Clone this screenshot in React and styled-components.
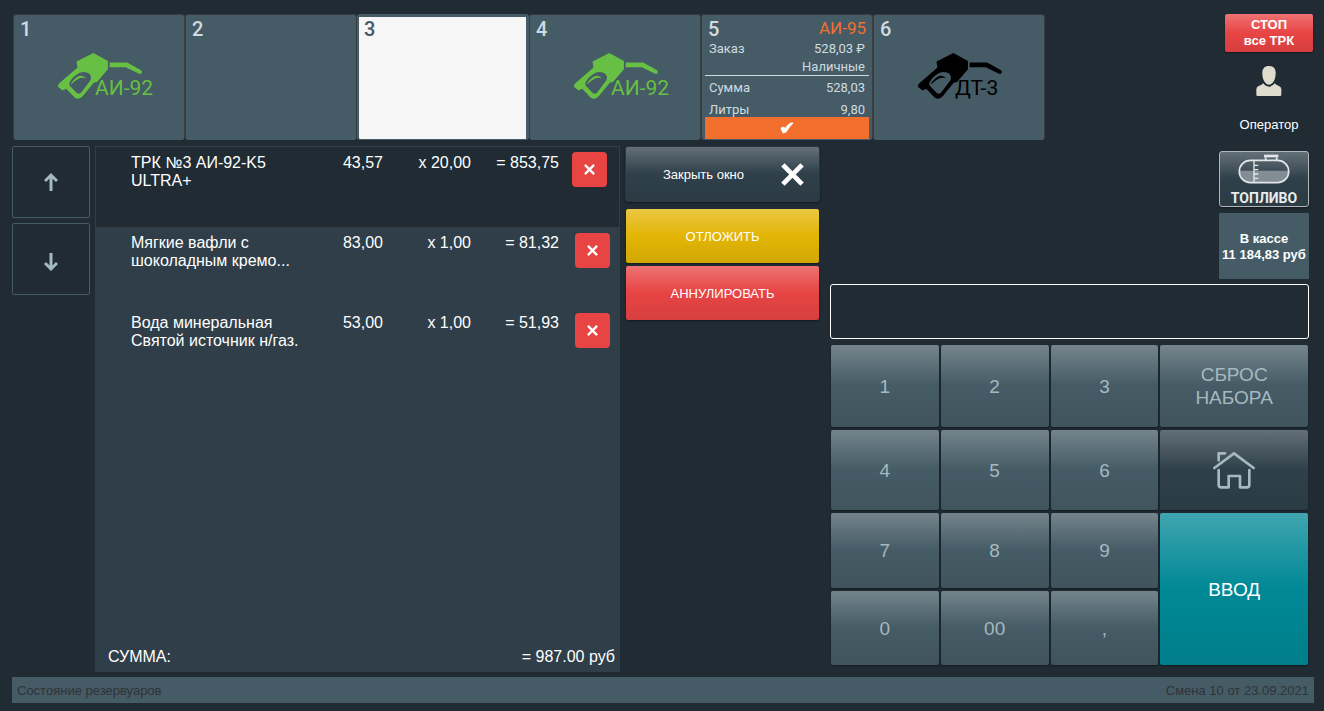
import React, { useState } from 'react';
import styled, { createGlobalStyle, css } from 'styled-components';

const GlobalStyle = createGlobalStyle`
  * {
    box-sizing: border-box;
  }
  body {
    margin: 0;
    background: #202b34;
    font-family: 'Liberation Sans', Arial, sans-serif;
  }
  button {
    font-family: inherit;
    cursor: pointer;
  }
`;

const gloss = css`
  background-image: linear-gradient(
    rgba(255, 255, 255, 0.25),
    rgba(255, 255, 255, 0) 50%,
    rgba(0, 0, 0, 0.08)
  );
  box-shadow: 0 1px 2px rgba(0, 0, 0, 0.4);
`;

const Screen = styled.div`
  display: flex;
  flex-direction: column;
  min-height: 100vh;
  padding: 14px 10px 8px 12px;
  color: #fff;
`;

const TopBar = styled.header`
  display: flex;
  justify-content: space-between;
  gap: 16px;
  padding: 0 1px;
`;

const Pumps = styled.div`
  flex: 1;
  display: grid;
  grid-template-columns: repeat(6, minmax(0, 172px));
`;

const PumpTile = styled.section`
  display: flex;
  flex-direction: column;
  height: 126px;
  padding: 2px 3px 1px;
  border: 1px solid #3b3c3f;
  border-bottom: 0;
  border-radius: 3px;
  background: #455b65;
  color: ${(props) => (props.$active ? '#455b65' : '#cfdbe0')};
  font-family: Roboto, sans-serif;
  ${(props) =>
    props.$active &&
    css`
      background: #f6f6f6;
      border: 2px solid #455b65;
      border-width: 3px 3px 1px 2px;
      padding: 0 2px;
    `}
`;

const PumpHead = styled.div`
  display: flex;
  justify-content: space-between;
  height: 22px;
  padding: 0 3px;
  line-height: 24px;
`;

const PumpNumber = styled.span`
  font-size: 20px;
  font-weight: 500;
`;

const FuelName = styled.span`
  font-size: 17px;
  line-height: 22px;
  color: #f36f2d;
`;

const Nozzle = styled.div`
  display: grid;
  padding: 13px 0 0 40px;
  color: ${(props) => props.$color};

  > * {
    grid-area: 1 / 1;
  }
`;

const NozzleLabel = styled.span`
  align-self: end;
  margin-left: 38px;
  font-size: 21px;
  line-height: 24px;
`;

const PumpLine = styled.div`
  display: flex;
  justify-content: space-between;
  height: 18px;
  padding: 0 4px;
  font-size: 13px;
  line-height: 20px;
  white-space: nowrap;
`;

const PumpTotals = styled.div`
  display: flex;
  flex-direction: column;
  gap: 4px;
  height: 42px;
  border-top: 1px solid #cfdbe0;
  padding-top: 2px;
`;

const PumpConfirm = styled.button`
  flex: 1;
  display: flex;
  align-items: center;
  justify-content: center;
  padding: 0;
  border: 0;
  background: #f36f2d;
  color: #fff;
`;

const OperatorBox = styled.div`
  display: flex;
  flex-direction: column;
  align-items: center;
  width: 88px;
  gap: 14px;
`;

const StopButton = styled.button`
  ${gloss}
  width: 100%;
  height: 38px;
  padding: 0;
  border: 0;
  border-radius: 2px;
  background-color: #e84444;
  color: #fff;
  font-size: 13px;
  font-weight: bold;
  line-height: 16px;
`;

const OperatorName = styled.span`
  padding-top: 6px;
  font-size: 13px;
  line-height: 18px;
`;

const Main = styled.main`
  flex: 1;
  display: grid;
  grid-template-columns: 78px minmax(0, 525fr) minmax(0, 195fr) minmax(0, 484fr);
  gap: 5px;
  padding: 6px 5px 5px 0;
`;

const ScrollNav = styled.nav`
  display: flex;
  flex-direction: column;
  gap: 5px;
`;

const ScrollButton = styled.button`
  display: flex;
  align-items: center;
  justify-content: center;
  height: 72px;
  padding: 0;
  border: 1px solid #455b65;
  border-radius: 2px;
  background: transparent;
  color: #a5b9c0;
`;

const Receipt = styled.section`
  display: flex;
  flex-direction: column;
  justify-content: space-between;
  border: 1px solid #2f3e48;
  background: #2f3e48;
  font-size: 16px;
`;

const ReceiptTable = styled.table`
  width: 100%;
  table-layout: fixed;
  border-collapse: collapse;
  line-height: 18px;
`;

const ReceiptRow = styled.tr`
  height: 80px;
  background: ${(props) => (props.$selected ? '#202b34' : 'transparent')};
`;

const NameCell = styled.td`
  padding: 7px 0 0 35px;
  vertical-align: top;
`;

const NumberCell = styled.td`
  width: ${(props) => props.$width}px;
  padding: 7px 0 0;
  vertical-align: top;
  text-align: right;
  white-space: nowrap;
`;

const RemoveCell = styled.td`
  width: 60px;
  padding: ${(props) => (props.$selected ? '5px 0 0 13px' : '6px 0 0 16px')};
  vertical-align: top;
`;

const RemoveButton = styled.button`
  display: flex;
  align-items: center;
  justify-content: center;
  width: 35px;
  height: 35px;
  padding: 0;
  border: 0;
  border-radius: 4px;
  background: #e84444;
  color: #fff;
`;

const ReceiptTotal = styled.div`
  display: flex;
  justify-content: space-between;
  padding: 0 4px 4px 12px;
  line-height: 20px;
`;

const Actions = styled.div`
  display: flex;
  flex-direction: column;
  gap: 3px;
`;

const CloseButton = styled.button`
  ${gloss}
  display: flex;
  align-items: center;
  height: 56px;
  margin-bottom: 4px;
  padding: 0 15px 0 0;
  border: 1px solid #2a3842;
  border-radius: 3px;
  background-color: #2f404a;
  color: #fff;
  font-size: 13px;
`;

const CloseLabel = styled.span`
  flex: 1;
`;

const ActionButton = styled.button`
  ${gloss}
  height: 54px;
  margin: 0 1px;
  padding: 0;
  border: 0;
  border-radius: 2px;
  background-color: ${(props) => props.$color};
  color: #fff;
  font-size: 13px;
`;

const Terminal = styled.div`
  display: flex;
  flex-direction: column;
  gap: 5px;
  padding: 5px 0 7px 5px;
`;

const Tiles = styled.div`
  align-self: flex-end;
  display: flex;
  flex-direction: column;
  gap: 6px;
  width: 90px;
`;

const FuelButton = styled.button`
  ${gloss}
  display: flex;
  flex-direction: column;
  align-items: center;
  justify-content: space-between;
  height: 56px;
  padding: 2px 0 0;
  border: 1px solid #b0b6b9;
  border-radius: 3px;
  background-color: #2f404a;
  color: #e9edee;
  font-family: Roboto, sans-serif;
  font-size: 14px;
  font-weight: bold;
  line-height: 16px;
`;

const CashBox = styled.div`
  display: flex;
  align-items: center;
  justify-content: center;
  height: 66px;
  padding-top: 2px;
  background: #455b65;
  font-size: 13px;
  font-weight: bold;
  line-height: 16px;
  text-align: center;
  white-space: nowrap;
`;

const Display = styled.input`
  width: 100%;
  height: 55px;
  padding: 0 12px;
  border: 1px solid #fff;
  border-radius: 3px;
  background: transparent;
  color: #fff;
  font-size: 20px;
  text-align: right;
  outline: none;
`;

const Keypad = styled.div`
  flex: 1;
  display: grid;
  grid-template-columns: repeat(3, minmax(0, 108fr)) minmax(0, 148fr);
  grid-template-rows: 82fr 80fr 75fr 74fr;
  gap: 3px 2px;
  padding: 1px 1px 0;
`;

const Key = styled.button`
  ${gloss}
  display: flex;
  align-items: center;
  justify-content: center;
  padding: 0;
  border: 0;
  border-radius: 2px;
  background-color: ${(props) => props.$color || '#455b65'};
  color: ${(props) => (props.$enter ? '#fff' : '#a5b9c0')};
  font-size: 19px;
  line-height: 23px;
  grid-row: ${(props) => (props.$enter ? 'span 2' : 'auto')};
`;

const StatusBar = styled.footer`
  display: flex;
  justify-content: space-between;
  padding: 1px 5px 0;
  background: #455b65;
  color: #2f3438;
  font-size: 13px;
  line-height: 25px;
`;

const NozzleIcon = () => (
  <svg width="86" height="48" viewBox="170 155 258 145" fill="currentColor" aria-hidden="true">
    <path
      fillRule="evenodd"
      d="M279 158 323 182V207L290 246 280 248 248 287Q236 302 223 293L197 266 186 271 172 260Q171 254 177 249L231 202 228 184ZM208 245Q204 252 210 259L228 278Q237 285 244 275L270 240Q275 229 266 220 253 212 238 218 218 228 208 245Z"
    />
    <path d="M211 252Q213 243 229 231 246 221 258 235L252 233Q240 231 232 237 220 243 213 252Z" />
    <path d="M328 187H381L423 210Q427 213 425 218 422 223 417 221L377 201H328Z" />
  </svg>
);

const CrossIcon = ({ size, weight }) => (
  <svg width={size} height={size} viewBox="0 0 24 24" aria-hidden="true">
    <path d="M2 2 22 22M22 2 2 22" stroke="currentColor" strokeWidth={weight} fill="none" />
  </svg>
);

const ArrowIcon = ({ down }) => (
  <svg width="14" height="24" viewBox="0 0 14 24" fill="none" stroke="currentColor" aria-hidden="true">
    <path
      d={down ? 'M7 6V22M1 16 7 22 13 16' : 'M7 21V5M1 11 7 5 13 11'}
      strokeWidth="3"
    />
  </svg>
);

const CheckIcon = () => (
  <svg width="14" height="12" viewBox="0 0 14 12" aria-hidden="true">
    <path d="M1 6 4 5 5 7Q8 2 11 1H13Q9 5 6 10L3 11Z" fill="currentColor" stroke="currentColor" />
  </svg>
);

const PersonIcon = () => (
  <svg width="26" height="30" viewBox="0 0 78 90" fill="#dedccd" aria-hidden="true">
    <path d="M39 0C53 0 60 9 59 24 58 42 50 56 39 56S20 42 19 24C18 9 25 0 39 0Z" />
    <path d="M22 52Q29 62 39 62T56 52Q60 57 69 60 76 63 76 70V86Q76 90 72 90H5Q1 90 1 86V70Q1 63 8 60 18 57 22 52Z" />
  </svg>
);

const TankIcon = () => (
  <svg width="52" height="30" viewBox="0 0 156 90" fill="none" stroke="#e3e7e9" strokeWidth="5" aria-hidden="true">
    <path d="M5 50H151Q149 84 117 85H39Q8 84 5 50Z" fill="#838d94" stroke="none" />
    <rect x="4" y="19" width="148" height="67" rx="33" />
    <path d="M48 19V86M48 34H61M48 47H61M48 60H61M48 73H61" strokeWidth="4" />
    <path d="M83 18V10M116 18V10" />
    <path d="M78 6H121" strokeWidth="8" />
  </svg>
);

const HomeIcon = () => (
  <svg
    width="42"
    height="38"
    viewBox="0 0 126 114"
    fill="none"
    stroke="currentColor"
    strokeWidth="8"
    strokeLinejoin="round"
    strokeLinecap="round"
    aria-hidden="true"
  >
    <path d="M4 51 63 7 122 51M17 28V7H36" />
    <path d="M17 57V101Q17 109 25 109H47V75H81V109H101Q109 109 109 101V57" />
  </svg>
);

const pumps = [
  { id: 1, fuel: 'АИ-92', color: '#67bf44' },
  { id: 2 },
  { id: 3, active: true },
  { id: 4, fuel: 'АИ-92', color: '#67bf44' },
  {
    id: 5,
    order: { fuel: 'АИ-95', amount: '528,03 ₽', payment: 'Наличные', sum: '528,03', liters: '9,80' },
  },
  { id: 6, fuel: 'ДТ-3', color: '#000' },
];

const items = [
  { name: 'ТРК №3 АИ-92-K5 ULTRA+', price: '43,57', count: '20,00', total: '853,75' },
  { name: 'Мягкие вафли с шоколадным кремо...', price: '83,00', count: '1,00', total: '81,32' },
  { name: 'Вода минеральная Святой источник н/газ.', price: '53,00', count: '1,00', total: '51,93' },
];

const Pump = ({ pump }) => (
  <PumpTile $active={pump.active}>
    <PumpHead>
      <PumpNumber>{pump.id}</PumpNumber>
      {pump.order && <FuelName>{pump.order.fuel}</FuelName>}
    </PumpHead>
    {pump.fuel && (
      <Nozzle $color={pump.color}>
        <NozzleIcon />
        <NozzleLabel>{pump.fuel}</NozzleLabel>
      </Nozzle>
    )}
    {pump.order && (
      <>
        <PumpLine>
          <span>Заказ</span>
          <span>{pump.order.amount}</span>
        </PumpLine>
        <PumpLine>
          <span />
          <span>{pump.order.payment}</span>
        </PumpLine>
        <PumpTotals>
          <PumpLine>
            <span>Сумма</span>
            <span>{pump.order.sum}</span>
          </PumpLine>
          <PumpLine>
            <span>Литры</span>
            <span>{pump.order.liters}</span>
          </PumpLine>
        </PumpTotals>
        <PumpConfirm aria-label="Принять">
          <CheckIcon />
        </PumpConfirm>
      </>
    )}
  </PumpTile>
);

const App = () => {
  const [selected, setSelected] = useState(0);
  const [value, setValue] = useState('');

  const move = (step) => {
    setSelected(Math.min(items.length - 1, Math.max(0, selected + step)));
  };
  const digit = (key) => (
    <Key key={key} onClick={() => setValue(value + key)}>
      {key}
    </Key>
  );

  return (
    <Screen>
      <GlobalStyle />
      <TopBar>
        <Pumps>
          {pumps.map((pump) => (
            <Pump key={pump.id} pump={pump} />
          ))}
        </Pumps>
        <OperatorBox>
          <StopButton>
            СТОП
            <br />
            все ТРК
          </StopButton>
          <PersonIcon />
          <OperatorName>Оператор</OperatorName>
        </OperatorBox>
      </TopBar>

      <Main>
        <ScrollNav>
          <ScrollButton aria-label="Вверх" onClick={() => move(-1)}>
            <ArrowIcon />
          </ScrollButton>
          <ScrollButton aria-label="Вниз" onClick={() => move(1)}>
            <ArrowIcon down />
          </ScrollButton>
        </ScrollNav>

        <Receipt>
          <ReceiptTable>
            <tbody>
              {items.map((item, i) => (
                <ReceiptRow key={item.name} $selected={i === selected}>
                  <NameCell>{item.name}</NameCell>
                  <NumberCell $width={80}>{item.price}</NumberCell>
                  <NumberCell $width={88}>x {item.count}</NumberCell>
                  <NumberCell $width={88}>= {item.total}</NumberCell>
                  <RemoveCell $selected={i === selected}>
                    <RemoveButton aria-label="Удалить">
                      <CrossIcon size={11} weight={5} />
                    </RemoveButton>
                  </RemoveCell>
                </ReceiptRow>
              ))}
            </tbody>
          </ReceiptTable>
          <ReceiptTotal>
            <span>СУММА:</span>
            <span>= 987.00 руб</span>
          </ReceiptTotal>
        </Receipt>

        <Actions>
          <CloseButton>
            <CloseLabel>Закрыть окно</CloseLabel>
            <CrossIcon size={23} weight={5} />
          </CloseButton>
          <ActionButton $color="#e3b505">ОТЛОЖИТЬ</ActionButton>
          <ActionButton $color="#e84444">АННУЛИРОВАТЬ</ActionButton>
        </Actions>

        <Terminal>
          <Tiles>
            <FuelButton>
              <TankIcon />
              ТОПЛИВО
            </FuelButton>
            <CashBox>
              В кассе
              <br />
              11 184,83 руб
            </CashBox>
          </Tiles>
          <Display
            aria-label="Набор"
            value={value}
            onChange={(e) => setValue(e.target.value)}
          />
          <Keypad>
            {['1', '2', '3'].map(digit)}
            <Key onClick={() => setValue('')}>
              СБРОС
              <br />
              НАБОРА
            </Key>
            {['4', '5', '6'].map(digit)}
            <Key $color="#2f404a" aria-label="Домой">
              <HomeIcon />
            </Key>
            {['7', '8', '9'].map(digit)}
            <Key $enter $color="#008896">
              ВВОД
            </Key>
            {['0', '00', ','].map(digit)}
          </Keypad>
        </Terminal>
      </Main>

      <StatusBar>
        <span>Состояние резервуаров</span>
        <span>Смена 10 от 23.09.2021</span>
      </StatusBar>
    </Screen>
  );
};

export default App;
